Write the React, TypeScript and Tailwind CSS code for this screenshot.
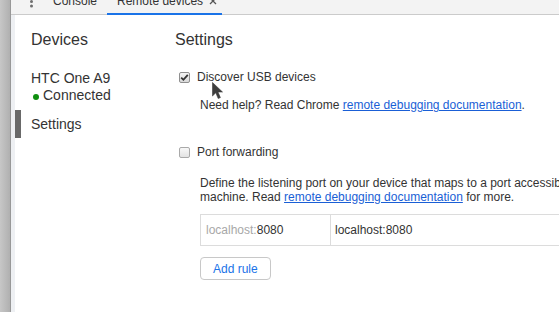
import React from "react";

function CheckBox({ checked }: { checked: boolean }) {
  return (
    <span
      className={
        checked
          ? "relative w-[11px] h-[11px] shrink-0 rounded-[2px] border border-[#8f8f8f] bg-gradient-to-b from-[#f4f4f4] to-[#d9d9d9] flex items-center justify-center"
          : "relative w-[11px] h-[11px] shrink-0 rounded-[2px] border border-[#a9a9a9] bg-gradient-to-b from-[#f8f8f8] to-[#e3e3e3]"
      }
    >
      {checked && (
        <svg width="9" height="9" viewBox="0 0 9 9">
          <path d="M1.2 4.6 L3.4 6.8 L7.8 1.8" fill="none" stroke="#333" strokeWidth="1.8" />
        </svg>
      )}
    </span>
  );
}

export default function App() {
  return (
    <div className="relative w-[559px] h-[312px] overflow-hidden flex bg-white text-[#333] font-['Liberation_Sans',Arial,sans-serif]">
      {/* window edge strip */}
      <div className="w-[11px] shrink-0 bg-gradient-to-r from-[#c7c7c7] to-[#b0b0b0] border-r border-[#989898]" />

      <div className="flex-1 min-w-0 flex flex-col">
        {/* tab bar, scrolled so only the bottom is visible */}
        <div className="h-[15px] shrink-0 overflow-hidden bg-[#f3f3f3] shadow-[inset_0_-1px_0_#cbcbcb]">
          <div className="flex h-[27px] mt-[-12px] pl-[15px] text-[12px] leading-[14px] text-[#333]">
            <div className="w-[17px] flex">
              <svg width="17" height="27" viewBox="0 0 17 27">
                <circle cx="5.5" cy="9" r="1.5" fill="#6e6e6e" />
                <circle cx="5.5" cy="13.5" r="1.5" fill="#6e6e6e" />
                <circle cx="5.5" cy="18" r="1.5" fill="#6e6e6e" />
              </svg>
            </div>
            <div className="flex items-center px-[10px] border-b-2 border-transparent">Console</div>
            <div className="flex items-center pl-[10px] pr-[5px] border-b-2 border-[#1a73e8]">
              <span>Remote devices</span>
              <svg className="ml-[6px]" width="8" height="8" viewBox="0 0 8 8">
                <path d="M1 1 L7 7 M7 1 L1 7" stroke="#555" strokeWidth="1.3" />
              </svg>
            </div>
          </div>
        </div>

        <div className="flex-1 flex">
          <div className="w-[4px] shrink-0 bg-[#eef0f3]" />

          {/* sidebar */}
          <div className="w-[160px] shrink-0 flex flex-col pt-[15px]">
            <div className="pl-[16px] text-[16px] leading-[19px]">Devices</div>
            <div className="pl-[16px] mt-[21px] text-[14px] leading-[17px]">
              <div>HTC One A9</div>
              <div className="flex items-center">
                <span className="w-[6px] h-[6px] rounded-full bg-[#0f8f0f] ml-[2px] mr-[4px] mt-[2px]" />
                <span>Connected</span>
              </div>
            </div>
            <div className="mt-[6px] h-[28px] flex items-center border-l-[6px] border-[#696969] pl-[10px] text-[14px] leading-[17px]">
              Settings
            </div>
          </div>

          {/* content */}
          <div className="flex-1 min-w-0 flex flex-col pt-[15px] text-[12px] leading-[14px]">
            <div className="text-[16px] leading-[19px]">Settings</div>

            <label className="mt-[21px] pl-[4px] flex items-center">
              <CheckBox checked />
              <span className="ml-[7px]">Discover USB devices</span>
            </label>
            <div className="mt-[14px] pl-[25px] whitespace-nowrap">
              Need help? Read Chrome{" "}
              <a className="text-[#1a5fd6] underline">remote debugging documentation</a>.
            </div>

            <label className="mt-[33px] pl-[4px] flex items-center">
              <CheckBox checked={false} />
              <span className="ml-[7px]">Port forwarding</span>
            </label>

            <div className="mt-[17px] pl-[25px] whitespace-nowrap">
              Define the listening port on your device that maps to a port accessible from your development
              <br />
              machine. Read <a className="text-[#1a5fd6] underline">remote debugging documentation</a> for more.
            </div>

            <div className="ml-[25px] mt-[10px] w-[520px] shrink-0 flex border border-[#dcdcdc] h-[32px]">
              <div className="w-[130px] shrink-0 border-r border-[#dcdcdc] px-[5px] flex items-center">
                <span className="text-[#a8a8a8]">localhost:</span>
                <span>8080</span>
              </div>
              <div className="flex-1 pl-[4px] flex items-center">localhost:8080</div>
            </div>

            <div className="ml-[25px] mt-[11px]">
              <button className="h-[23px] px-[12px] border border-[#c8c8c8] rounded-[4px] bg-white text-[#1a73e8] text-[12px] leading-[14px]">
                Add rule
              </button>
            </div>
          </div>
        </div>
      </div>

      {/* mouse pointer */}
      <svg className="absolute left-[212px] top-[82px]" width="13" height="18" viewBox="0 0 13 18">
        <path d="M0.5 0.5 L0.5 14 L3.8 10.8 L6.2 16.5 L8.4 15.6 L6 10 L10.5 10 Z" fill="#3d3d3d" stroke="#3d3d3d" strokeWidth="0.6" strokeLinejoin="round" />
      </svg>
    </div>
  );
}
